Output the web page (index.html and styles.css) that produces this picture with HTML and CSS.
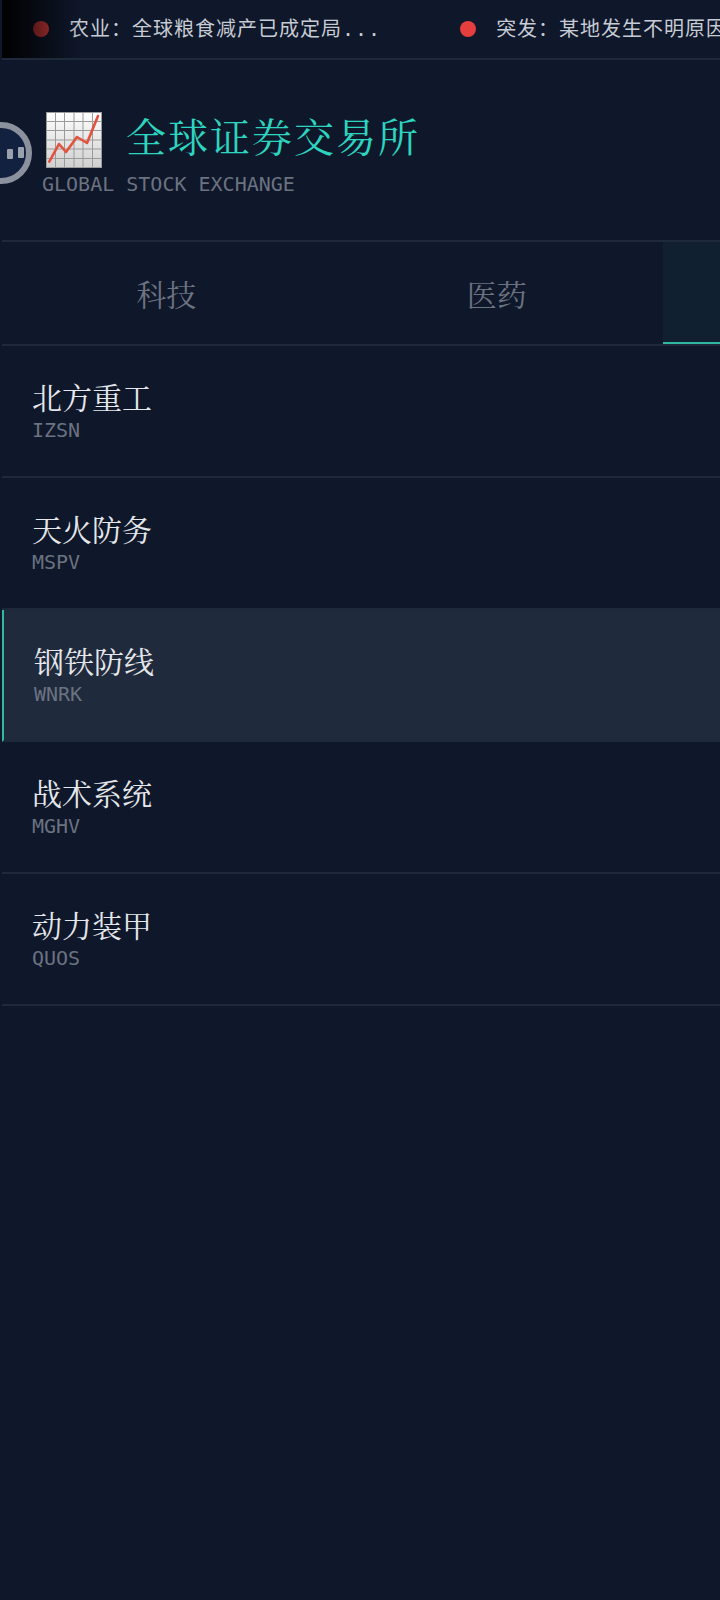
FILE: index.html
```html
<!DOCTYPE html>
<html lang="en">
<head>
    <meta charset="UTF-8">
    <meta name="viewport" content="width=device-width, initial-scale=1.0">
    <title>全球证券交易所</title>
    <link rel="stylesheet" href="styles.css">
</head>
<body>
    <div class="app">
        <div class="ticker">
            <div class="ticker-item">
                <span class="ticker-dot"></span>
                <span class="ticker-text">农业：全球粮食减产已成定局...</span>
            </div>
            <div class="ticker-item">
                <span class="ticker-dot"></span>
                <span class="ticker-text">突发：某地发生不明原因事故...</span>
            </div>
            <div class="ticker-fade"></div>
        </div>

        <header class="header">
            <div class="brand">
                <svg class="brand-icon" viewBox="0 0 56 56" aria-hidden="true">
                    <defs>
                        <linearGradient id="chart-bg" x1="0" y1="0" x2="0" y2="1">
                            <stop offset="0" stop-color="#ffffff"/>
                            <stop offset="1" stop-color="#cfcfcf"/>
                        </linearGradient>
                    </defs>
                    <rect width="56" height="56" fill="url(#chart-bg)"/>
                    <path d="M0.5 0V56M9.5 0V56M18.5 0V56M28 0V56M37 0V56M46.5 0V56M55.5 0V56M0 0.5H56M0 9.5H56M0 18.5H56M0 28H56M0 37H56M0 46.5H56M0 55.5H56" stroke="#9b9b9b" stroke-width="1" fill="none"/>
                    <path d="M3.3 49.7L13 32L20 40L31 25L41 31L52 4" stroke="#e2533f" stroke-width="2.6" fill="none" stroke-linejoin="round" stroke-linecap="round"/>
                </svg>
                <h1 class="brand-title">全球证券交易所</h1>
            </div>
            <div class="brand-sub">GLOBAL STOCK EXCHANGE</div>
        </header>

        <nav class="tabs">
            <div class="tab">科技</div>
            <div class="tab">医药</div>
            <div class="tab tab-active">军工</div>
        </nav>

        <ul class="stock-list">
            <li class="stock">
                <div class="stock-name">北方重工</div>
                <div class="stock-code">IZSN</div>
            </li>
            <li class="stock">
                <div class="stock-name">天火防务</div>
                <div class="stock-code">MSPV</div>
            </li>
            <li class="stock stock-active">
                <div class="stock-name">钢铁防线</div>
                <div class="stock-code">WNRK</div>
            </li>
            <li class="stock">
                <div class="stock-name">战术系统</div>
                <div class="stock-code">MGHV</div>
            </li>
            <li class="stock">
                <div class="stock-name">动力装甲</div>
                <div class="stock-code">QUOS</div>
            </li>
        </ul>
    </div>

    <div class="float-button">
        <span class="float-eye"></span>
        <span class="float-eye float-eye-high"></span>
    </div>
</body>
</html>
```

FILE: styles.css
```css
* {
    box-sizing: border-box;
}
html, body {
    height: 100%;
}
body {
    margin: 0;
    background-color: #0f172a;
    color: #e2e8f0;
    font-family: "DejaVu Sans Mono", "Noto Serif CJK SC", "Noto Sans CJK SC", monospace;
    overflow: hidden;
}
.app {
    position: relative;
    height: 1600px;
    margin-left: 2px;
    background-color: #0f172a;
    overflow: hidden;
}

/* news ticker */
.ticker {
    position: relative;
    display: flex;
    height: 60px;
    padding-left: 31px;
    gap: 79px;
    align-items: center;
    border-bottom: 2px solid #1e293b;
    white-space: nowrap;
    overflow: hidden;
}
.ticker-item {
    display: flex;
    align-items: center;
    flex-shrink: 0;
    gap: 20px;
}
.ticker-dot {
    width: 16px;
    height: 16px;
    border-radius: 50%;
    background-color: #e53e3e;
}
.ticker-text {
    padding-bottom: 3px;
    font-family: "DejaVu Sans Mono", "Noto Sans CJK SC", monospace;
    font-size: 20px;
    letter-spacing: 1px;
    color: #c6cbd4;
}
.ticker-fade {
    position: absolute;
    top: 0;
    left: 0;
    bottom: 0;
    width: 80px;
    background: linear-gradient(to right, #000, rgba(15, 23, 42, 0));
}

/* title block */
.header {
    height: 182px;
    padding: 52px 0 0 40px;
    border-bottom: 2px solid #1e293b;
}
.brand {
    display: flex;
    align-items: center;
    gap: 24px;
    padding-left: 4px;
}
.brand-icon {
    width: 56px;
    height: 56px;
    flex-shrink: 0;
}
.brand-title {
    margin: 0 0 4px;
    font-size: 40px;
    line-height: 52px;
    font-weight: normal;
    letter-spacing: 2px;
    color: #2dd4bf;
}
.brand-sub {
    margin-top: 4px;
    font-size: 20px;
    color: #6b7280;
}

/* category tabs */
.tabs {
    display: flex;
    height: 104px;
    border-bottom: 2px solid #1e293b;
    overflow: hidden;
}
.tab {
    flex: 0 0 330.5px;
    display: flex;
    align-items: center;
    justify-content: center;
    padding-right: 2px;
    font-size: 30px;
    color: #6b7280;
}
.tab-active {
    height: 102px;
    background-color: rgba(45, 212, 191, 0.05);
    border-bottom: 2px solid #2fb9a4;
    color: #2dd4bf;
}

/* stock rows */
.stock-list {
    margin: 0;
    padding: 0;
    list-style: none;
}
.stock {
    height: 132px;
    padding: 32px 30px 0;
    border-bottom: 2px solid #1e293b;
}
.stock-name {
    font-size: 30px;
    line-height: 42px;
    color: #e5e7eb;
}
.stock-code {
    font-size: 20px;
    line-height: 20px;
    color: #6b7280;
}
.stock-active {
    background-color: #1f2a3c;
    border-left: 2px solid #2fb9a4;
}

/* floating assistant button, mostly off the left edge */
.float-button {
    position: absolute;
    top: 122px;
    left: -30px;
    display: flex;
    align-items: center;
    justify-content: flex-end;
    gap: 5px;
    width: 62px;
    height: 62px;
    padding-right: 2px;
    border: 6px solid #8b929e;
    border-radius: 50%;
    background-color: #12213f;
}
.float-eye {
    width: 6px;
    height: 10px;
    margin-top: 2px;
    background-color: #9aa1ac;
    border-radius: 1px;
}
.float-eye-high {
    margin-top: -1px;
    height: 11px;
}
```
